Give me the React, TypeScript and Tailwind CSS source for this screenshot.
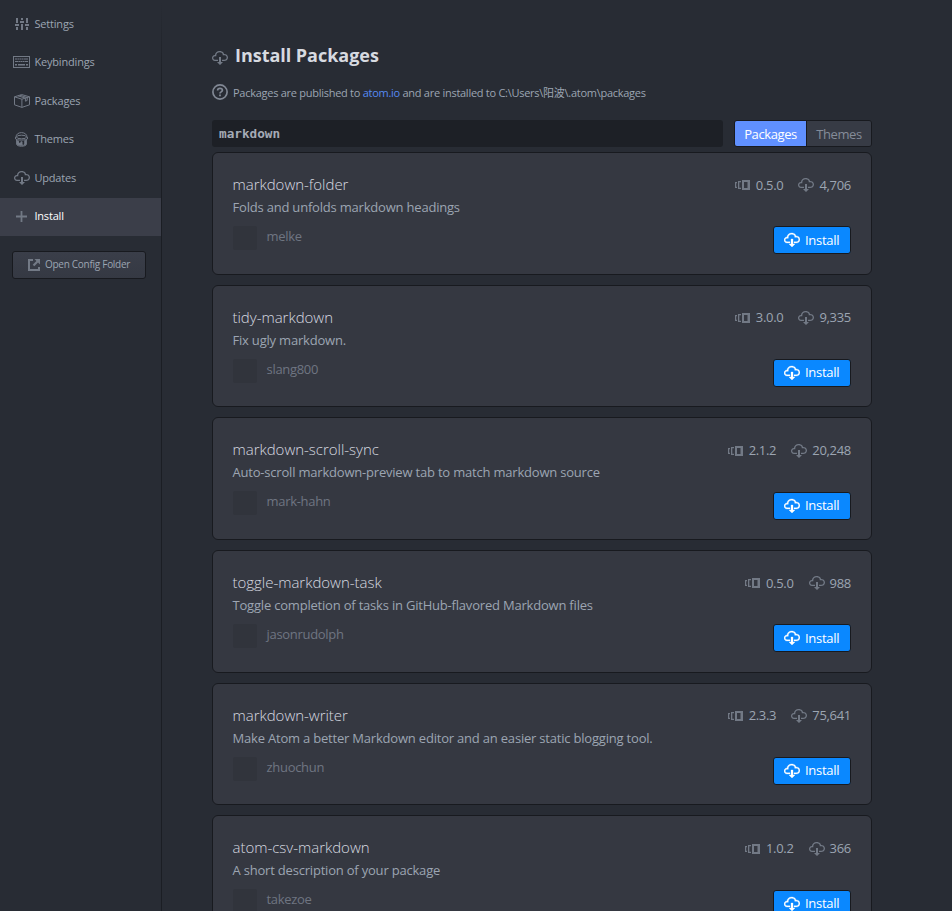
import type { ReactNode } from "react";

type IconProps = { className?: string };

function CloudDownload({ className = "" }: IconProps) {
  return (
    <svg viewBox="0 0 16 16" width="16" height="16" fill="currentColor" className={`shrink-0 ${className}`}>
      <path d="M9 12h2l-3 3-3-3h2V7h2v5zm3-8c0-.44-.91-3-4.5-3C5.08 1 3 2.92 3 5 1.02 5 0 6.52 0 8c0 1.53 1 3 3 3h3V9.7H3C1.38 9.7 1.3 8.28 1.3 8c0-.17.05-1.7 1.7-1.7h1.3V5c0-1.39 1.56-2.7 3.2-2.7 2.55 0 3.13 1.55 3.2 1.8v1.2H12c.81 0 2.7.22 2.7 2.2 0 2.09-2.25 2.2-2.7 2.2h-2V11h2c2.08 0 4-1.16 4-3.5C16 5.06 14.08 4 12 4z" />
    </svg>
  );
}

function Versions() {
  return (
    <svg viewBox="0 0 15 10" width="15" height="10" fill="currentColor" className="shrink-0">
      <path fillRule="evenodd" d="M7 0h8v10H7zM9 2v6h3.500V2z" />
      <path d="M3 1H6v1.200H4.300v5.600H6V9H3zM0 2H2v1.200H1.200v3.600H2V8H0z" />
    </svg>
  );
}

function Sliders() {
  return (
    <svg viewBox="0 0 14 12" width="14" height="12" fill="currentColor">
      <path d="M1 0h2v5H1zM0 6h4v2H0zM1 9h2v3H1zM6 0h2v2H6zM5 3h4v2H5zM6 6h2v6H6zM11 0h2v5h-2zM10 6h4v2h-4zM11 9h2v3h-2z" />
    </svg>
  );
}

function Keyboard() {
  return (
    <svg viewBox="0 0 17 12" width="17" height="12" fill="currentColor">
      <path fillRule="evenodd" d="M0 0h17v12H0zM1 1v10h15V1z" />
      <path d="M2 2.500h2.600v1H2zM5 2.500h1.600v1H5zM7 2.500h1.600v1H7zM9 2.500h1.600v1H9zM11 2.500h4v1h-4zM2 5h3.600v1H2zM6 5h1.600v1H6zM8 5h1.600v1H8zM10 5h1.600v1H10zM12 5h3v1h-3zM2 8h2v1.500H2zM5 8h7v1.500H5zM13 8h2v1.500h-2z" />
    </svg>
  );
}

function Package() {
  return (
    <svg viewBox="0 0 16 14" width="16" height="14" fill="none" stroke="currentColor" strokeWidth="1">
      <path d="M.5 2.800 7.800.6l7.700 2.200v8l-7.600 2.600-7.400-2.600zM.5 2.800l7.400 2.400 7.600-2.400M7.900 5.200v8.200M4 1.800l7.400 2.400v3l1.800-.8V3.600L5.900 1.200" />
    </svg>
  );
}

function PaintCan() {
  return (
    <svg viewBox="0 0 13 15" width="13" height="15" fill="none" stroke="currentColor">
      <path d="M1 5.200C1 2.500 3.200.6 6.500.6S12 2.500 12 5.200" />
      <ellipse cx="6.5" cy="5" rx="5" ry="1.8" />
      <path d="M.6 5v2c0 1.400 11.800 1.400 11.800 0V5M1.600 7.500V12c0 3 9.800 3 9.800 0V7.500" />
      <path d="M2 8.200c1.600.7 2 .3 2 1.800s1.500 1.300 1.500 0c0-1 2-1 2 0v2c0 1.300 1.700 1 1.700 0V8.600l1.800-.6v4.400c-1 1.800-8 1.800-9 0z" fill="currentColor" stroke="none" />
    </svg>
  );
}

function Plus() {
  return (
    <svg viewBox="0 0 11 11" width="11" height="11" fill="currentColor">
      <path d="M4.600 0h1.800v4.600H11v1.800H6.400V11H4.600V6.400H0V4.600h4.600z" />
    </svg>
  );
}

function LinkExternal() {
  return (
    <svg viewBox="0 0 12 12" width="12" height="12" fill="currentColor" className="shrink-0">
      <path d="M0 0h5v2H2v8h8V8h2v4H0zM6.500 0H12v5.500L10 3.600 6.300 7.300 4.700 5.700 8.400 2z" />
    </svg>
  );
}

function Question() {
  return (
    <svg viewBox="0 0 16 16" width="16" height="16" fill="none" stroke="currentColor" className="shrink-0">
      <circle cx="8" cy="8" r="7.1" strokeWidth="1.7" />
      <path d="M5.600 6.500C5.600 3.600 10.400 3.600 10.400 6.300 10.400 7.900 8 7.800 8 9.500" strokeWidth="1.7" />
      <path d="M7.100 10.600h1.800v1.700H7.100z" fill="currentColor" stroke="none" />
    </svg>
  );
}

const nav: { label: string; icon: ReactNode; active?: boolean }[] = [
  { label: "Settings", icon: <Sliders /> },
  { label: "Keybindings", icon: <Keyboard /> },
  { label: "Packages", icon: <Package /> },
  { label: "Themes", icon: <PaintCan /> },
  { label: "Updates", icon: <CloudDownload /> },
  { label: "Install", icon: <Plus />, active: true },
];

const packages = [
  { name: "markdown-folder", version: "0.5.0", downloads: "4,706", text: "Folds and unfolds markdown headings", author: "melke" },
  { name: "tidy-markdown", version: "3.0.0", downloads: "9,335", text: "Fix ugly markdown.", author: "slang800" },
  { name: "markdown-scroll-sync", version: "2.1.2", downloads: "20,248", text: "Auto-scroll markdown-preview tab to match markdown source", author: "mark-hahn" },
  { name: "toggle-markdown-task", version: "0.5.0", downloads: "988", text: "Toggle completion of tasks in GitHub-flavored Markdown files", author: "jasonrudolph" },
  { name: "markdown-writer", version: "2.3.3", downloads: "75,641", text: "Make Atom a better Markdown editor and an easier static blogging tool.", author: "zhuochun" },
  { name: "atom-csv-markdown", version: "1.0.2", downloads: "366", text: "A short description of your package", author: "takezoe" },
];

function Card({ pkg }: { pkg: (typeof packages)[number] }) {
  return (
    <article className="flex h-[122.7px] shrink-0 justify-between rounded-md border border-[#181a1f] bg-[#353841] pr-5 pl-[19.5px]">
      <div className="pt-[21px]">
        <h2 className="text-[15px] leading-[21px] font-light tracking-[-0.02px] text-[#d7dae0]">{pkg.name}</h2>
        <p className="mt-[2px] text-[13px] leading-[20px] tracking-[-0.2px] text-[#9ca5b2]">{pkg.text}</p>
        <div className="mt-[9px] flex">
          <span className="h-6 w-6 rounded-[2px] bg-[#31343c]" />
          <span className="ml-[10px] text-[13px] leading-[20px] tracking-[-0.3px] text-[#6f7581]">{pkg.author}</span>
        </div>
      </div>
      <div className="flex flex-col items-end pt-[22.3px]">
        <div className="flex h-5 items-center text-[13px] tracking-[-0.3px] text-[#9ca5b2]">
          <span className="text-[#727985]"><Versions /></span>
          <span className="ml-[6px]">{pkg.version}</span>
          <CloudDownload className="ml-[15px] text-[#727985]" />
          <span className="ml-[5px]">{pkg.downloads}</span>
        </div>
        <button className="mt-[31px] flex h-7 w-[78px] items-center rounded-[3px] border border-[#181a1f] bg-[#0a88ff] pl-[10px] text-[13px] tracking-[-0.3px] text-white">
          <CloudDownload className="stroke-current stroke-[0.3]" />
          <span className="ml-[5px]">Install</span>
        </button>
      </div>
    </article>
  );
}

export default function App() {
  return (
    <div className="flex h-[911px] w-[952px] overflow-hidden bg-[#282c34] font-['Open_Sans','Noto_Sans_CJK_SC',sans-serif] whitespace-nowrap text-[#9ca5b2]">
      <nav className="flex w-[161px] shrink-0 flex-col pt-[5px]">
        {nav.map((item) => (
          <div key={item.label} className={item.active ? "flex h-[38.5px] items-center bg-[#3b3e49] text-white" : "flex h-[38.5px] items-center"}>
            <span className="ml-[12px] flex w-[19px] justify-center pb-[1px] text-[#727985]">{item.icon}</span>
            <span className="ml-[3.4px] pb-[0.5px] text-[11px] tracking-[-0.18px]">{item.label}</span>
          </div>
        ))}
        <button className="mt-[15px] ml-3 flex h-7 w-[134px] items-center rounded-[3px] border border-[#181a1f] bg-linear-to-b from-[#3a3e49] to-[#353943] pl-[15px] text-[10px]">
          <span className="text-[#737a86]"><LinkExternal /></span>
          <span className="ml-[5px] pb-[1px] tracking-[-0.28px]">Open Config Folder</span>
        </button>
      </nav>
      <div className="w-px shrink-0 bg-linear-to-b from-[#282c34] to-[#1b1e24] to-[100px]" />
      <main className="flex w-[710px] flex-col pl-[50px]">
        <header className="mt-[42px] flex h-7 shrink-0 items-center">
          <CloudDownload className="mt-[3px] text-[#737a86]" />
          <h1 className="ml-[7px] pb-[2px] text-[18px] font-bold tracking-[-0.03px] text-[#d7dae0]">Install Packages</h1>
        </header>
        <div className="mt-[12px] flex h-5 shrink-0 items-center text-[11px] tracking-[-0.27px]">
          <span className="text-[#818894]"><Question /></span>
          <p className="ml-[5px] pt-[2px]">
            Packages are published to <a className="text-[#568af2]">atom.io</a> and are installed to C:\Users\阳波\.atom\packages
          </p>
        </div>
        <div className="mt-[18px] flex h-[27px] shrink-0">
          <div className="flex w-[511px] items-center rounded-[3px] bg-[#1d2026] pl-[7px] font-['DejaVu_Sans_Mono',monospace] text-[12.7px] font-bold text-[#a5abb6]">markdown</div>
          <div className="ml-[11px] flex h-[27px] w-[138px] rounded-[3px] border border-[#181a1f] text-[13px] tracking-[-0.4px]">
            <span className="flex w-[72px] items-center justify-center rounded-l-[2px] border-r border-[#181a1f] bg-[#6090ff] pt-[2px] text-white">Packages</span>
            <span className="flex flex-1 items-center justify-center rounded-r-[2px] bg-[#373b45] pt-[2px] text-[#858c99]">Themes</span>
          </div>
        </div>
        <section className="mt-[5px] flex flex-col gap-[10px]">
          {packages.map((pkg) => (
            <Card key={pkg.name} pkg={pkg} />
          ))}
        </section>
      </main>
    </div>
  );
}
